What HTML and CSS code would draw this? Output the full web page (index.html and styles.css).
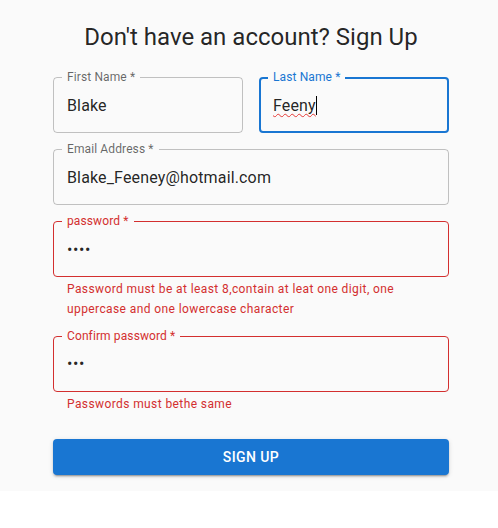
FILE: index.html
```html
<!DOCTYPE html>
<html lang="en">
<head>
<meta charset="utf-8">
<title>Sign Up</title>
<link rel="stylesheet" href="styles.css">
</head>
<body>
<div class="page">
  <main class="container">
    <h1 class="title">Don't have an account? Sign Up</h1>
    <form class="form">
      <div class="row">
        <div class="field">
          <span class="label">First Name *</span>
          <span class="value">Blake</span>
        </div>
        <div class="field focused">
          <span class="label">Last Name *</span>
          <span class="value"><span class="misspelled">Feeny</span><span class="caret"></span></span>
        </div>
      </div>
      <div class="field">
        <span class="label">Email Address *</span>
        <span class="value">Blake_Feeney@hotmail.com</span>
      </div>
      <div class="group">
        <div class="field error">
          <span class="label">password *</span>
          <span class="value dots">••••</span>
        </div>
        <p class="helper">Password must be at least 8,contain at leat one digit, one uppercase and one lowercase character</p>
      </div>
      <div class="group">
        <div class="field error">
          <span class="label">Confirm password *</span>
          <span class="value dots">•••</span>
        </div>
        <p class="helper">Passwords must bethe same</p>
      </div>
      <button type="button" class="submit">Sign Up</button>
    </form>
  </main>
</div>
</body>
</html>
```

FILE: styles.css
```css
html, body {
  margin: 0;
  padding: 0;
  background: #ffffff;
}

body {
  font-family: Roboto, "Liberation Sans", sans-serif;
  color: rgba(0, 0, 0, 0.87);
}

.page {
  background: #fafafa;
  padding: 21px 0 16px;
}

.container {
  width: 396px;
  margin-left: 53px;
}

.title {
  margin: 0;
  font-size: 24px;
  font-weight: 400;
  line-height: 32px;
  text-align: center;
  color: rgba(0, 0, 0, 0.87);
}

.form {
  margin-top: 24px;
  display: flex;
  flex-direction: column;
  gap: 16px;
}

.row {
  display: grid;
  grid-template-columns: 1fr 1fr;
  gap: 16px;
}

.group {
  display: flex;
  flex-direction: column;
}

.field {
  position: relative;
  box-sizing: border-box;
  height: 56px;
  border: 1px solid rgba(0, 0, 0, 0.23);
  border-radius: 4px;
  padding: 0 13px;
  display: flex;
  align-items: center;
}

.label {
  position: absolute;
  top: -9px;
  left: 8px;
  padding: 0 5px;
  background: #fafafa;
  font-size: 12px;
  line-height: 17px;
  letter-spacing: 0.00938em;
  color: rgba(0, 0, 0, 0.6);
  white-space: nowrap;
}

.value {
  font-size: 16px;
  line-height: 23px;
  letter-spacing: 0.00938em;
  color: rgba(0, 0, 0, 0.87);
  display: flex;
  align-items: center;
}

.focused {
  border: 2px solid #1976d2;
  padding: 0 12px;
}

.focused .label {
  top: -10px;
  left: 7px;
  color: #1976d2;
}

.misspelled {
  text-decoration: underline wavy #e53935;
  text-decoration-thickness: 1px;
  text-underline-offset: 2px;
  text-decoration-skip-ink: none;
}

.caret {
  width: 1px;
  height: 19px;
  background: #000;
}

.error {
  border-color: #d32f2f;
}

.error .label {
  color: #d32f2f;
}

.dots {
  letter-spacing: 0.6px;
}

.helper {
  margin: 3px 14px 0;
  font-size: 12px;
  line-height: 1.66;
  letter-spacing: 0.03333em;
  color: #d32f2f;
}

.submit {
  margin-top: 8px;
  height: 36px;
  border: 0;
  border-radius: 4px;
  background: #1976d2;
  color: #ffffff;
  font-family: Roboto, "Liberation Sans", sans-serif;
  font-size: 14px;
  font-weight: 500;
  letter-spacing: 0.02857em;
  text-transform: uppercase;
  box-shadow: 0 3px 1px -2px rgba(0, 0, 0, 0.2), 0 2px 2px 0 rgba(0, 0, 0, 0.14), 0 1px 5px 0 rgba(0, 0, 0, 0.12);
  cursor: pointer;
}
```
